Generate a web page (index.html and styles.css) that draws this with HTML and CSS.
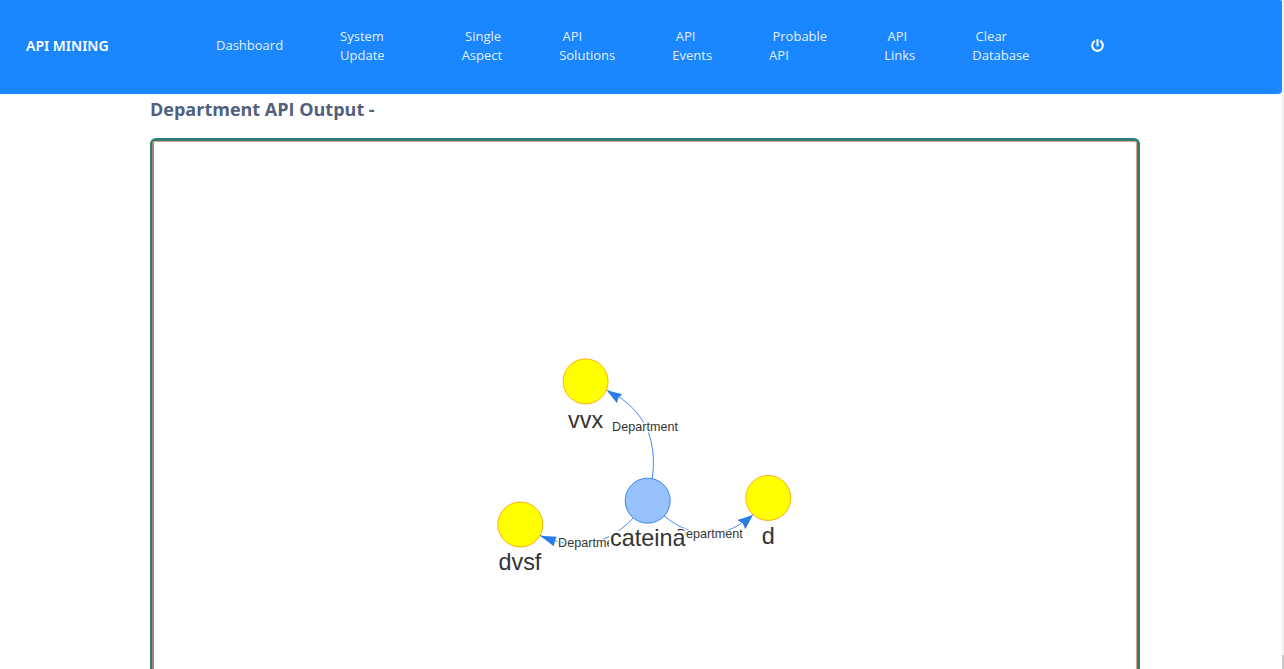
FILE: index.html
```html
<!DOCTYPE html>
<html lang="en">
<head>
  <meta charset="utf-8">
  <meta name="viewport" content="width=device-width, initial-scale=1">
  <title>API Mining</title>
  <link rel="stylesheet" href="styles.css">
</head>
<body>
  <div class="page">
    <header class="navbar">
      <a class="brand" href="#">API MINING</a>
      <nav class="menu" aria-label="Main">
        <a class="single" href="#">Dashboard</a>
        <a class="wide" href="#">System<br>Update</a>
        <a href="#">&nbsp;Single<br>Aspect</a>
        <a href="#">&nbsp;API<br>Solutions</a>
        <a href="#">&nbsp;API<br>Events</a>
        <a href="#">&nbsp;Probable<br>API</a>
        <a href="#">&nbsp;API<br>Links</a>
        <a href="#">&nbsp;Clear<br>Database</a>
        <a class="power" href="#" aria-label="Log out">
          <svg viewBox="0 0 512 512" aria-hidden="true"><path d="M400 54.1c63 45 104 118.600 104 201.900 0 136.800-110.800 247.700-247.500 248C120 504.300 8.200 393 8 256.400 7.900 173.100 48.900 99.300 111.800 54.200c11.700-8.300 28-4.800 35 7.700L162.600 90c5.900 10.500 3.100 23.800-6.600 31-41.500 30.800-68 79.600-68 134.900-.1 92.300 74.500 168.100 168 168.100 91.600 0 168.600-74.200 168-169.100-.3-51.800-24.700-101.800-68.100-134-9.700-7.200-12.400-20.500-6.500-30.900l15.800-28.100c7-12.400 23.200-16.100 34.800-7.800zM296 264V24c0-13.300-10.700-24-24-24h-32c-13.300 0-24 10.700-24 24v240c0 13.300 10.700 24 24 24h32c13.300 0 24-10.700 24-24z"/></svg>
        </a>
      </nav>
    </header>
    <main class="content">
      <h1>Department API Output -</h1>
      <div class="graph-frame">
        <div class="graph-inner">
          <svg class="graph" viewBox="-300 0 600 600" role="img" aria-label="Department graph">
            <g class="edges">
              <path d="M2.800 398.300Q31.700 296.700-66.100 266.100"/>
              <path d="M2.800 398.300Q73.300 474.200 137.200 395.600"/>
              <path d="M2.800 398.300Q-53.100 479.400-138.900 425"/>
            </g>
            <g class="arrows">
              <path d="M-42.600 275.900L-25.200 280.300L-29.500 284L-31.100 290.300Z"/>
              <path d="M120 414.400L102.600 420L108.600 423.700L111.400 430.300Z"/>
              <path d="M-116.700 437.400L-98.100 438.600L-100 443L-101.400 449.200Z"/>
            </g>
            <g class="edge-labels">
              <text x="0" y="321">Department</text>
              <text x="72" y="440">Department</text>
              <text x="-60" y="450">Department</text>
            </g>
            <g class="nodes">
              <circle cx="-66" cy="266" r="25"/>
              <circle cx="137" cy="395.500" r="25"/>
              <circle cx="-138.500" cy="425" r="25"/>
              <circle class="root" cx="3" cy="398.500" r="25"/>
            </g>
            <g class="node-labels">
              <text x="-66" y="318">vvx</text>
              <text x="137" y="447">d</text>
              <text x="-139" y="476">dvsf</text>
              <rect class="label-back" x="-40" y="432" width="85" height="26"/>
              <text x="3" y="449">cateina</text>
            </g>
          </svg>
        </div>
      </div>
    </main>
  </div>
  <div class="scroll-track"><div class="scroll-thumb"></div></div>
</body>
</html>
```
FILE: styles.css
```css
* {
  box-sizing: border-box;
}

body {
  margin: 0;
  display: grid;
  grid-template-columns: minmax(0, 1fr) 2px;
  height: 100vh;
  overflow: hidden;
  background: #fff;
  font-family: "Open Sans", "Noto Sans", sans-serif;
}

.page {
  min-width: 0;
  overflow: hidden;
}

.navbar {
  display: flex;
  align-items: center;
  padding: 26px 26px 28px;
  border-radius: 0 2px 4px 0;
  background: #1a86ff;
}

.navbar a {
  color: #fff;
  text-decoration: none;
}

.brand {
  flex: none;
  width: 190px;
  font-family: "Noto Sans", "Open Sans", sans-serif;
  font-size: 14px;
  font-weight: 600;
  line-height: 20px;
}

.menu {
  display: flex;
  align-items: center;
  gap: 57px;
  min-height: 40px;
  font-size: 13px;
  line-height: 19px;
  white-space: nowrap;
}

.navbar .menu a {
  color: rgba(255, 255, 255, 0.9);
}

.menu .single {
  padding-bottom: 2px;
}

.menu .wide {
  padding-right: 20px;
}

.menu .power {
  display: flex;
  padding: 0 0 2px 5px;
}

.power svg {
  width: 13px;
  height: 13px;
  fill: #fff;
}

.content {
  padding: 0 142px 0 150px;
}

h1 {
  margin: 0 0 13px;
  color: #525f7f;
  font-size: 18px;
  font-weight: 700;
  line-height: 31px;
}

.graph-frame {
  border: 3px solid #2d7c79;
  border-left-width: 2px;
  border-radius: 6px;
}

.graph-inner {
  border: 1px solid #e0a283;
  border-left: 2px solid #a08672;
  border-radius: 3px;
}

.graph {
  display: block;
  width: 100%;
  height: 540px;
  font-family: "Liberation Sans", Arial, sans-serif;
}

.edges {
  fill: none;
  stroke: #2b7ce9;
  stroke-width: 1;
}

.arrows {
  fill: #2b7ce9;
}

.nodes {
  fill: #ff0;
  stroke: #ffa500;
  stroke-width: 1;
}

.nodes .root {
  fill: #97c2fc;
  stroke: #2b7ce9;
}

.graph text {
  fill: #343434;
  text-anchor: middle;
}

.edge-labels {
  font-size: 14px;
  stroke: #fff;
  stroke-width: 3px;
  stroke-linejoin: round;
  paint-order: stroke;
}

.node-labels {
  font-size: 26px;
}

.label-back {
  fill: #fff;
}

.scroll-track {
  display: flex;
  flex-direction: column;
  justify-content: flex-end;
  background: #f1f1f1;
}

.scroll-thumb {
  height: 14px;
  background: #c9c9c9;
}
```
